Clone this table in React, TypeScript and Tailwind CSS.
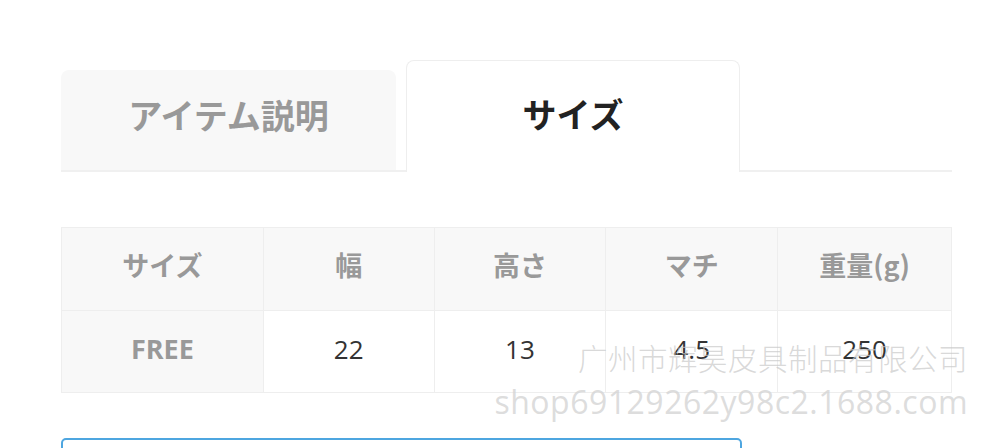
const font = "font-['Open_Sans','Noto_Sans_CJK_JP',sans-serif]";

const headers = ['サイズ', '幅', '高さ', 'マチ', '重量(g)'];
const values = ['22', '13', '4.5', '250'];
const widths = ['w-[202px]', 'w-[171px]', 'w-[172px]', 'w-[172px]', 'w-[174px]'];

export default function App() {
    return (
        <div className={`relative w-[1000px] h-[448px] overflow-hidden bg-white ${font}`}>
            <div className="pl-[61px] pt-[60px] w-[952px]">
                {/* Tabs */}
                <div className="flex items-end gap-[10px] border-b-2 border-[#f0f0f0]">
                    <div className="w-[335px] h-[100px] bg-[#f8f8f8] rounded-t-[8px] flex items-center justify-center pb-[12px]">
                        <span className="text-[34px] font-bold text-[#999] font-['Noto_Sans_CJK_JP',sans-serif]">アイテム説明</span>
                    </div>
                    <div className="w-[334px] h-[112px] -mb-[2px] bg-white border border-b-0 border-[#eee] rounded-t-[8px] flex items-center justify-center pb-[6px]">
                        <span className="text-[34px] font-bold text-[#222] font-['Noto_Sans_CJK_JP',sans-serif]">サイズ</span>
                    </div>
                </div>

                {/* Size table */}
                <table className="mt-[55px] border-collapse">
                    <tbody>
                        <tr className="h-[83px] bg-[#f8f8f8]">
                            {headers.map((h, i) => (
                                <th key={h} className={`${widths[i]} pb-[8px] border border-[#eee] text-[27px] font-bold text-[#999] font-['Noto_Sans_CJK_JP',sans-serif]`}>
                                    {h}
                                </th>
                            ))}
                        </tr>
                        <tr className="h-[82px]">
                            <th className="pb-[5px] border border-[#eee] bg-[#f8f8f8] text-[27px] font-bold text-[#999]">FREE</th>
                            {values.map((v) => (
                                <td key={v} className="pb-[5px] border border-[#eee] text-center text-[26px] text-[#333]">
                                    {v}
                                </td>
                            ))}
                        </tr>
                    </tbody>
                </table>

                {/* Next panel, cut off */}
                <div className="mt-[45px] w-[681px] h-[40px] border-2 border-[#4ea6e0] rounded-[5px]"></div>
            </div>

            {/* Watermark */}
            <div className="absolute right-[32px] top-[343px] text-right leading-none pointer-events-none">
                <p className="text-[29.5px] font-light text-[#c8c8c8]/70 tracking-[0.5px] font-['Noto_Sans_CJK_SC',sans-serif]">广州市辉昊皮具制品有限公司</p>
                <p className="mt-[13px] text-[32px] text-[#d4d4d4]/80 tracking-[0.5px] font-['Open_Sans',sans-serif]">shop69129262y98c2.1688.com</p>
            </div>
        </div>
    );
}
